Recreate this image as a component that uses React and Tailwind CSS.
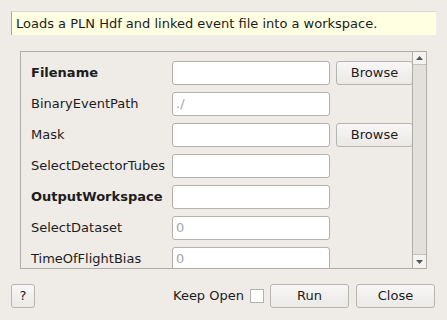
import React from "react";

const rows = [
  { label: "Filename", bold: true, value: "", browse: true },
  { label: "BinaryEventPath", value: "./" },
  { label: "Mask", value: "", browse: true },
  { label: "SelectDetectorTubes", value: "" },
  { label: "OutputWorkspace", bold: true, value: "" },
  { label: "SelectDataset", value: "0" },
  { label: "TimeOfFlightBias", value: "0" },
];

function Btn({ children, className = "" }) {
  return (
    <div
      className={
        "flex items-center justify-center h-[24px] rounded-[3px] border border-[#b8b5b1] bg-gradient-to-b from-[#f8f7f6] to-[#ebe9e6] text-[#1c1c1c] " +
        className
      }
    >
      {children}
    </div>
  );
}

export default function App() {
  return (
    <div
      className="w-[447px] h-[320px] bg-[#efebe7] text-[13px] text-[#1c1c1c] overflow-hidden flex flex-col"
      style={{ fontFamily: '"DejaVu Sans", sans-serif' }}
    >
      <div className="mt-[11px] ml-[11px] w-[425px] h-[24px] bg-[#ffffe1] border-l border-t border-l-[#a8a6a2] border-t-[#d8d6cf] flex items-center pl-[4px]">
        Loads a PLN Hdf and linked event file into a workspace.
      </div>

      <div className="mt-[16px] ml-[20px] w-[407px] h-[218px] border border-[#b0ada9] flex">
        <div className="w-[391px] shrink-0 overflow-hidden flex flex-col gap-[7px] pt-[9px] pl-[10px]">
          {rows.map((r) => (
            <div key={r.label} className="flex items-center h-[24px] shrink-0 w-[400px]">
              <div className={"w-[141px] shrink-0 " + (r.bold ? "font-bold" : "")}>{r.label}</div>
              <div className="w-[158px] h-[24px] shrink-0 bg-white border border-[#b4b1ad] rounded-[3px] flex items-center pl-[3px] text-[#a6a6a6]">
                {r.value}
              </div>
              {r.browse && (
                <Btn className="ml-[6px] w-[77px] shrink-0">Browse</Btn>
              )}
            </div>
          ))}
        </div>
        <div className="w-[14px] shrink-0 border-l border-[#b0ada9] bg-[#e3e0dc] flex flex-col">
          <div className="h-[13px] bg-[#f4f3f1] border-b border-[#c4c1bd] flex items-center justify-center">
            <svg width="7" height="4" viewBox="0 0 7 4"><path d="M0 4 L3.5 0 L7 4 Z" fill="#555" /></svg>
          </div>
          <div className="flex-1" />
          <div className="h-[14px] bg-[#f4f3f1] border-t border-[#c4c1bd] flex items-center justify-center">
            <svg width="7" height="4" viewBox="0 0 7 4"><path d="M0 0 L3.5 4 L7 0 Z" fill="#555" /></svg>
          </div>
        </div>
      </div>

      <div className="mt-[15px] ml-[11px] flex items-center h-[24px]">
        <Btn className="w-[24px]">?</Btn>
        <div className="ml-[138px]">Keep Open</div>
        <div className="ml-[6px] w-[14px] h-[14px] bg-white border border-[#b4b1ad]" />
        <Btn className="ml-[6px] w-[79px] border-[#3a7cb8] from-[#f4f6f8] to-[#dde3e8]">Run</Btn>
        <Btn className="ml-[7px] w-[79px]">Close</Btn>
      </div>
    </div>
  );
}
